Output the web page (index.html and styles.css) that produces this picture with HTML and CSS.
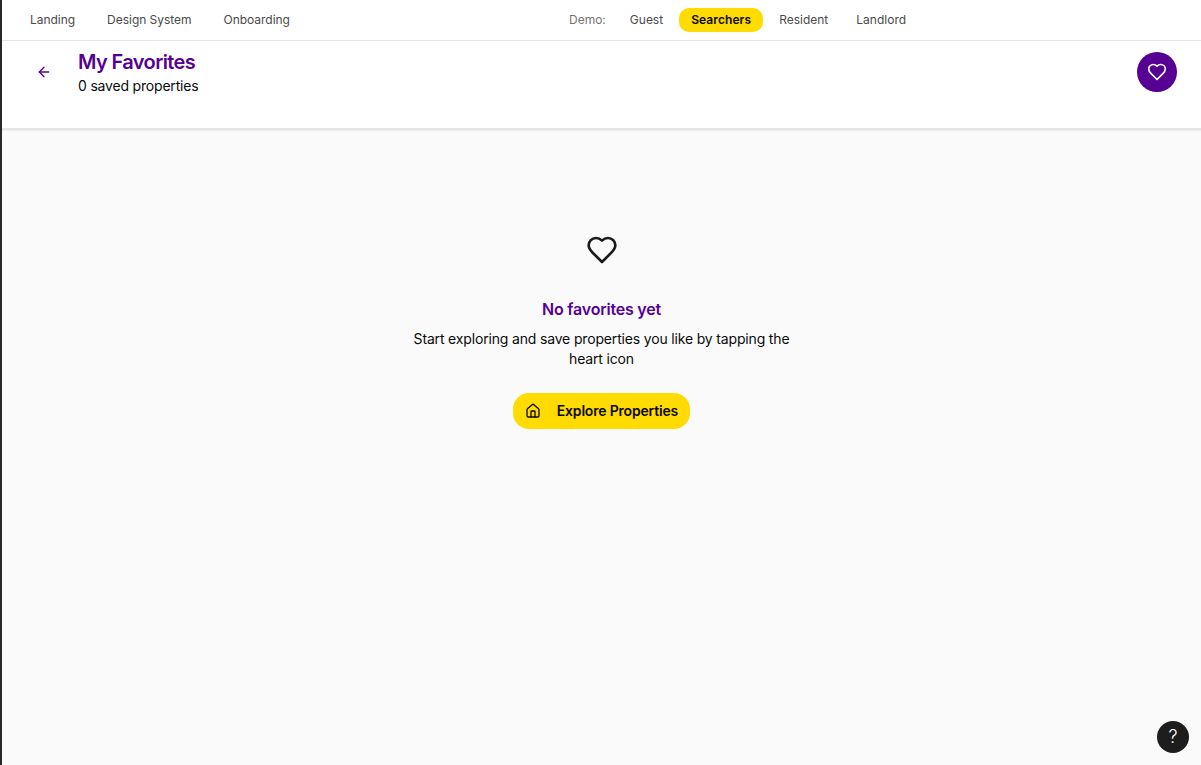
FILE: index.html
```html
<!DOCTYPE html>
<html lang="en">
<head>
<meta charset="utf-8">
<title>My Favorites</title>
<link rel="stylesheet" href="styles.css">
</head>
<body>
<nav class="topbar">
  <div class="links">
    <a>Landing</a>
    <a>Design System</a>
    <a>Onboarding</a>
  </div>
  <div class="roles">
    <span class="demo">Demo:</span>
    <a class="guest">Guest</a>
    <a class="active">Searchers</a>
    <a class="resident">Resident</a>
    <a>Landlord</a>
  </div>
</nav>
<header class="header">
  <button class="back" aria-label="Back">
    <svg width="16" height="16" viewBox="0 0 24 24"><path d="m12 19-7-7 7-7"/><path d="M19 12H5"/></svg>
  </button>
  <div class="heading">
    <h1>My Favorites</h1>
    <p>0 saved properties</p>
  </div>
  <div class="badge">
    <svg width="20" height="20" viewBox="0 0 24 24"><path d="M19 14c1.49-1.46 3-3.21 3-5.5A5.5 5.5 0 0 0 16.500 3c-1.760 0-3 .5-4.500 2-1.500-1.500-2.740-2-4.500-2A5.500 5.500 0 0 0 2 8.500c0 2.300 1.500 4.050 3 5.500l7 7Z"/></svg>
  </div>
</header>
<main class="empty">
  <svg class="heart" width="32" height="32" viewBox="0 0 24 24"><path d="M19 14c1.49-1.46 3-3.21 3-5.5A5.5 5.5 0 0 0 16.500 3c-1.760 0-3 .5-4.500 2-1.500-1.500-2.740-2-4.500-2A5.500 5.500 0 0 0 2 8.500c0 2.300 1.500 4.050 3 5.500l7 7Z"/></svg>
  <h2>No favorites yet</h2>
  <p>Start exploring and save properties you like by tapping the<br>heart icon</p>
  <button class="explore">
    <svg width="16" height="16" viewBox="0 0 24 24"><path d="M15 21v-8a1 1 0 0 0-1-1h-4a1 1 0 0 0-1 1v8"/><path d="M3 10a2 2 0 0 1 .709-1.528l7-5.999a2 2 0 0 1 2.582 0l7 5.999A2 2 0 0 1 21 10v9a2 2 0 0 1-2 2H5a2 2 0 0 1-2-2z"/></svg>
    <span>Explore Properties</span>
  </button>
</main>
<button class="help" aria-label="Help">?</button>
</body>
</html>
```
FILE: styles.css
```css
* { box-sizing: border-box; }
body {
  margin: 0;
  height: 765px;
  overflow: hidden;
  display: flex;
  flex-direction: column;
  border-left: 2px solid #28282b;
  background: #fafafa;
  color: #0a0a0a;
  font-family: Inter, "Liberation Sans", sans-serif;
}
h1, h2, p { margin: 0; }
button { border: 0; padding: 0; background: none; font: inherit; color: inherit; }
svg { display: block; flex: none; fill: none; stroke: currentColor; stroke-width: 2; stroke-linecap: round; stroke-linejoin: round; }
.topbar {
  height: 41px;
  flex: none;
  display: flex;
  align-items: center;
  background: #fff;
  border-bottom: 1px solid #e5e5e5;
  font-size: 12px;
  line-height: 16px;
  color: #4a4a4a;
  white-space: nowrap;
}
.links { display: flex; gap: 32px; width: 539px; padding-left: 28px; letter-spacing: -0.03px; }
.roles { display: flex; align-items: center; margin-left: 28px; }
.demo { color: #737373; margin-right: 24px; }
.guest { margin-right: 16px; }
.active {
  padding: 4px 12px;
  border-radius: 10px;
  background: #ffdb00;
  color: #0a0a0a;
  font-weight: 600;
  letter-spacing: 0.09px;
  margin-right: 16px;
}
.resident { margin-right: 28px; }
.header {
  height: 89px;
  flex: none;
  display: flex;
  align-items: flex-start;
  padding: 7px 24px 0 24px;
  background: #fff;
  border-bottom: 2px solid #e5e5e5;
  box-shadow: 0 1px 1px rgba(0, 0, 0, 0.05);
}
.back { margin-top: 16px; margin-left: 10px; color: #560094; }
.heading { margin-left: 26px; flex: 1; }
h1 { font-size: 20px; line-height: 28px; font-weight: 600; letter-spacing: -0.62px; color: #560094; }
.heading p { font-size: 14px; line-height: 20px; letter-spacing: -0.19px; }
.badge {
  width: 40px;
  height: 40px;
  margin-top: 4px;
  display: flex;
  align-items: center;
  justify-content: center;
  border-radius: 50%;
  background: #560094;
  color: #fff;
}
.empty { display: flex; flex-direction: column; align-items: center; padding-top: 104px; text-align: center; }
.heart { color: #1a1a1a; }
h2 { margin-top: 31px; font-size: 16px; line-height: 24px; font-weight: 600; letter-spacing: -0.22px; color: #560094; }
.empty p { margin-top: 8px; font-size: 14px; line-height: 20px; letter-spacing: -0.165px; }
.explore {
  width: 177px;
  height: 36px;
  margin-top: 24px;
  padding: 0 12px;
  display: flex;
  align-items: center;
  justify-content: space-between;
  border-radius: 16px;
  background: #ffdb00;
  font-size: 14px;
  font-weight: 600;
  letter-spacing: -0.19px;
  white-space: nowrap;
}
.explore span { padding-bottom: 1px; }
.help {
  position: fixed;
  right: 12px;
  bottom: 12px;
  width: 32px;
  height: 32px;
  border-radius: 50%;
  background: #1d1d1d;
  color: #fff;
  font-size: 18px;
  font-weight: 300;
  line-height: 32px;
}
```
